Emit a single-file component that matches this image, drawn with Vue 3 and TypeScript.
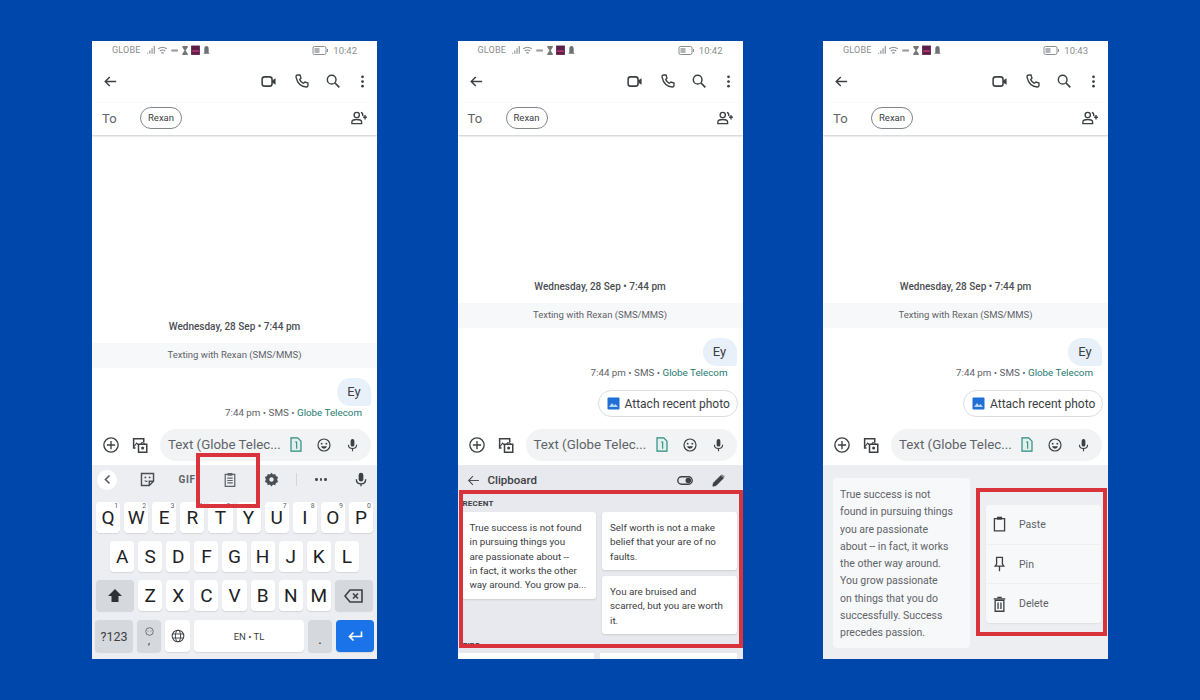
<script setup lang="ts">
interface PhoneData { id: number; time: string }
const phones: PhoneData[] = [
  { id: 1, time: '10:42' },
  { id: 2, time: '10:42' },
  { id: 3, time: '10:43' },
]
const row1 = ['Q','W','E','R','T','Y','U','I','O','P']
const nums = ['1','2','3','4','5','6','7','8','9','0']
const row2 = ['A','S','D','F','G','H','J','K','L']
const row3 = ['Z','X','C','V','B','N','M']
</script>

<template>
  <main class="page">
    <section v-for="p in phones" :key="p.id" class="phone">
      <div class="status">
        <span class="carrier">GLOBE</span>
        <svg class="status-icons" width="66" height="11" viewBox="0 0 60 10">
          <path d="M1 8h1V7H1zM3 8h1V5H3zM5 8h1V3H5zM7 8h1V1H7z" fill="#8a8d91"/>
          <path d="M11 3.500q4-3 8 0M12.500 5.500q2.500-2 5 0M14 7.500q1-1 2 0" stroke="#8a8d91" fill="none"/>
          <path d="M23 4h6v2h-6z" fill="#9a9da1"/>
          <path d="M33 1h5v1l-2 3 2 3v1h-5V8l2-3-2-3z" fill="#777"/>
          <rect x="41" y="0.500" width="8" height="8.500" fill="#5c1f49"/>
          <path d="M42 5h6v1h-6z" fill="#e0447c"/>
          <path d="M55 1q2 0 2 3v3l1 1h-6l1-1V4q0-3 2-3z" fill="#6d7074"/>
        </svg>
        <span class="grow"></span>
        <svg width="17" height="9" viewBox="0 0 16 9"><rect x=".5" y=".5" width="13" height="8" rx="1.500" fill="none" stroke="#8a8d91"/><path d="M2 2h5v5H2z" fill="#b0b3b6"/><path d="M14.500 3h1v3h-1z" fill="#8a8d91"/></svg>
        <span class="clock">{{ p.time }}</span>
      </div>

      <header class="appbar">
        <svg class="icon" viewBox="0 0 24 24"><path d="M20 12H5M11 5.500 4.500 12l6.500 6.500" fill="none" stroke="#3c4043" stroke-width="2"/></svg>
        <span class="grow"></span>
        <svg class="icon bar-video" viewBox="0 0 24 24"><path d="M3 9q0-3.500 3.500-3.500h7Q17 5.500 17 9v6q0 3.500-3.500 3.500h-7Q3 18.500 3 15z" fill="none" stroke="#3c4043" stroke-width="2.200"/><path d="M17 10.500l5-3v9l-5-3z" fill="#3c4043"/></svg>
        <svg class="icon bar-phone" viewBox="0 0 24 24"><path d="M5.500 3h3.500l1.500 4.500-2 2.500q2 4 5.500 5.500l2.500-2 4.500 1.500V18q0 3-2.500 3Q6 20 3 6q0-3 2.500-3z" fill="none" stroke="#3c4043" stroke-width="2"/></svg>
        <svg class="icon bar-search" viewBox="0 0 24 24"><circle cx="10" cy="10" r="6.500" fill="none" stroke="#3c4043" stroke-width="2.200"/><path d="M15 15l6.500 6.500" stroke="#3c4043" stroke-width="2.600"/></svg>
        <svg class="icon bar-more" viewBox="0 0 24 24"><circle cx="12" cy="4.500" r="2.200" fill="#3c4043"/><circle cx="12" cy="12" r="2.200" fill="#3c4043"/><circle cx="12" cy="19.500" r="2.200" fill="#3c4043"/></svg>
      </header>

      <div class="to-row">
        <span class="to">To</span>
        <span class="chip">Rexan</span>
        <span class="grow"></span>
        <svg class="add-person" viewBox="0 0 24 24"><circle cx="9" cy="8" r="3.500" fill="none" stroke="#3c4043" stroke-width="1.800"/><path d="M2.500 19.500v-2q0-3.500 6.500-3.500t6.500 3.500v2z" fill="none" stroke="#3c4043" stroke-width="1.800"/><path d="M14.500 4.500q3 .5 2.500 5M20 8v6M17.500 11h5" fill="none" stroke="#3c4043" stroke-width="1.800"/></svg>
      </div>

      <div class="messages">
        <div class="date">Wednesday, 28 Sep • 7:44 pm</div>
        <div class="band">Texting with Rexan (SMS/MMS)</div>
        <div class="bubble">Ey</div>
        <div class="meta">7:44 pm • SMS • <span class="carrier-link">Globe Telecom</span></div>
        <div v-if="p.id !== 1" class="attach">
          <svg width="13" height="13" viewBox="0 0 13 13"><rect x=".5" y=".5" width="12" height="12" rx="1" fill="#1f6fd6"/><path d="M2 10l3-4 2 2.500L8.500 7 11 10z" fill="#bcd6f6"/></svg>
          <span>Attach recent photo</span>
        </div>
      </div>

      <div class="compose">
        <svg class="compose-plus" viewBox="0 0 24 24"><circle cx="12" cy="12" r="9.500" fill="none" stroke="#3c4043" stroke-width="1.800"/><path d="M12 6.500v11M6.500 12h11" stroke="#3c4043" stroke-width="1.800"/></svg>
        <svg class="compose-media" viewBox="0 0 24 24"><path d="M6 16H3.500V3.500H17V8" fill="none" stroke="#3c4043" stroke-width="2"/><path d="M4 14l3.500-4.500 3 3" fill="none" stroke="#3c4043" stroke-width="1.500"/><path d="M10 11h11v10.500H10z" fill="none" stroke="#3c4043" stroke-width="2"/><path d="M13 11l1-2h3l1 2" fill="none" stroke="#3c4043" stroke-width="1.500"/><circle cx="15.500" cy="16" r="2" fill="#3c4043"/></svg>
        <div class="pill">
          <span class="pill-text">Text (Globe Telec...</span>
          <svg class="sim" viewBox="0 0 14 18"><path d="M1 1h8l4 4v12H1z" fill="#e3f1ee" stroke="#2a8a7d" stroke-width="1.400"/><path d="M6 6h1.800v8" fill="none" stroke="#2a8a7d" stroke-width="1.300"/></svg>
          <svg class="emoji" viewBox="0 0 24 24"><circle cx="12" cy="12" r="9" fill="none" stroke="#3c4043" stroke-width="1.800"/><circle cx="8.500" cy="10" r="1.400" fill="#3c4043"/><circle cx="15.500" cy="10" r="1.400" fill="#3c4043"/><path d="M7.500 14h9q-1 3.500-4.500 3.500T7.500 14z" fill="#3c4043"/></svg>
          <svg class="mic" viewBox="0 0 24 24"><rect x="9" y="2.500" width="6" height="12" rx="3" fill="#3c4043"/><path d="M5.500 11.500q0 6 6.500 6t6.500-6M12 17.500V22" fill="none" stroke="#3c4043" stroke-width="1.800"/></svg>
        </div>
      </div>

      <!-- Phone 1: keyboard -->
      <div v-if="p.id === 1" class="keyboard">
        <div class="toolbar">
          <span class="tb tb-back"><span class="back-circle"><svg width="9" height="11" viewBox="0 0 9 11"><path d="M6.500 1.500 2.500 5.500l4 4" fill="none" stroke="#555a60" stroke-width="1.600"/></svg></span></span>
          <span class="tb tb-sticker"><svg width="17" height="17" viewBox="0 0 24 24"><path d="M3.500 3.500h17v11l-6 6h-11z" fill="none" stroke="#4a4e53" stroke-width="2"/><path d="M14.500 20.500v-6h6" fill="none" stroke="#4a4e53" stroke-width="2"/><circle cx="9" cy="9" r="1.300" fill="#4a4e53"/><circle cx="15" cy="9" r="1.300" fill="#4a4e53"/><path d="M8 13.500q2 1.500 4 1" fill="none" stroke="#4a4e53" stroke-width="1.500"/></svg></span>
          <span class="tb tb-gif">GIF</span>
          <span class="tb tb-clip"><svg width="14" height="15" viewBox="0 0 20 22"><path d="M3 3.500h14V21H3z" fill="none" stroke="#5f6368" stroke-width="1.800"/><rect x="6.500" y="1.500" width="7" height="4" fill="#5f6368"/><path d="M6 9h8M6 12.500h8M6 16h8" stroke="#5f6368" stroke-width="1.600"/></svg></span>
          <span class="tb tb-gear"><svg width="15" height="15" viewBox="0 0 24 24"><path d="M12 1l2.500 3 3.500-1 1 3.500 3.500 1.500-1.500 4 1.500 4-3.500 1.500-1 3.500-3.500-1L12 23l-2.500-3-3.500 1-1-3.500L1.500 16 3 12 1.500 8 5 6.500 6 3l3.500 1z" fill="#4a4e53"/><circle cx="12" cy="12" r="3.500" fill="#eceef1"/></svg></span>
          <span class="tb tb-div"><i></i></span>
          <span class="tb tb-dots"><b></b><b></b><b></b></span>
          <span class="tb tb-mic"><svg width="16" height="17" viewBox="0 0 24 24"><rect x="8.500" y="2" width="7" height="13" rx="3.500" fill="#3c4043"/><path d="M5 11.500q0 7 7 7t7-7M12 18v4" fill="none" stroke="#3c4043" stroke-width="2"/></svg></span>
        </div>
        <div class="kb-row">
          <span v-for="(k, i) in row1" :key="k" class="key">{{ k }}<sup class="hint">{{ nums[i] }}</sup></span>
        </div>
        <div class="kb-row">
          <span v-for="k in row2" :key="k" class="key">{{ k }}</span>
        </div>
        <div class="kb-row">
          <span class="key fn wide">
            <svg width="16" height="15" viewBox="0 0 16 15"><path d="M8 1l7 7h-3.500v6h-7V8H1z" fill="#2f3235"/></svg>
          </span>
          <span v-for="k in row3" :key="k" class="key">{{ k }}</span>
          <span class="key fn wide">
            <svg width="19" height="14" viewBox="0 0 19 14"><path d="M6 1h12v12H6L1 7z" fill="none" stroke="#3c4043" stroke-width="1.600"/><path d="M9 4.500l5 5M14 4.500l-5 5" stroke="#3c4043" stroke-width="1.600"/></svg>
          </span>
        </div>
        <div class="kb-row kb-last">
          <span class="key fn wide sym">?123</span>
          <span class="key fn comma">
            <svg width="9" height="9" viewBox="0 0 9 9"><circle cx="4.500" cy="4.500" r="3.800" fill="none" stroke="#70757a"/><circle cx="3" cy="4" r=".6" fill="#70757a"/><circle cx="6" cy="4" r=".6" fill="#70757a"/></svg>
            <span>,</span>
          </span>
          <span class="key globe">
            <svg width="14" height="14" viewBox="0 0 24 24"><circle cx="12" cy="12" r="10" fill="none" stroke="#3c4043" stroke-width="1.800"/><ellipse cx="12" cy="12" rx="4.500" ry="10" fill="none" stroke="#3c4043" stroke-width="1.600"/><path d="M2.500 8.500h19M2.500 15.500h19" stroke="#3c4043" stroke-width="1.600"/></svg>
          </span>
          <span class="key space">EN • TL</span>
          <span class="key fn dot">.</span>
          <span class="key enter">
            <svg width="15" height="11" viewBox="0 0 15 11"><path d="M13.500 1v5H2M5.500 2 1.500 6l4 4" fill="none" stroke="#fff" stroke-width="1.700" transform="translate(0 -.5)"/></svg>
          </span>
        </div>
        <div class="mark mark-clip"></div>
      </div>

      <!-- Phone 2: clipboard -->
      <div v-else-if="p.id === 2" class="clipboard">
        <div class="clip-head">
          <svg width="13" height="13" viewBox="0 0 24 24"><path d="M22 12H4M11 4l-8 8 8 8" fill="none" stroke="#4a4e53" stroke-width="2"/></svg>
          <strong>Clipboard</strong>
          <span class="grow"></span>
          <svg class="clip-toggle" width="16" height="9" viewBox="0 0 16 9"><rect x=".8" y=".8" width="14.400" height="7.400" rx="3.700" fill="none" stroke="#3c4043" stroke-width="1.400"/><circle cx="11.300" cy="4.500" r="2.800" fill="#3c4043"/></svg>
          <svg width="15" height="15" viewBox="0 0 24 24"><path d="M3 21l1-5L16 4l4 4L8 20zM17.500 2.500l4 4" fill="#3c4043" stroke="#3c4043" stroke-width="1.500"/></svg>
        </div>
        <div class="recent">RECENT</div>
        <div class="clip-grid">
          <div class="clip-col">
            <div class="clip-card left">True success is not found<br>in pursuing things you<br>are passionate about --<br>in fact, it works the other<br>way around. You grow pa...</div>
          </div>
          <div class="clip-col">
            <div class="clip-card c1">Self worth is not a make<br>belief that your are of no<br>faults.</div>
            <div class="clip-card c2">You are bruised and<br>scarred, but you are worth<br>it.</div>
          </div>
        </div>
        <div class="tips">TIPS</div>
        <div class="tips-cards"><span></span><span></span></div>
        <div class="mark mark-recent"></div>
      </div>

      <!-- Phone 3: paste menu -->
      <div v-else class="paste-view">
        <div class="full-card">True success is not<br>found in pursuing things<br>you are passionate<br>about -- in fact, it works<br>the other way around.<br>You grow passionate<br>on things that you do<br>successfully. Success<br>precedes passion.</div>
        <div class="menu">
          <div class="menu-item">
            <svg width="15" height="16" viewBox="0 0 20 22"><path d="M3 3.500h14V20.500H3z" fill="none" stroke="#3c4043" stroke-width="1.800"/><rect x="6.500" y="1" width="7" height="4" fill="#3c4043"/></svg>
            <span>Paste</span>
          </div>
          <div class="menu-item">
            <svg width="15" height="16" viewBox="0 0 20 22"><path d="M6 2h8v9l2 3H4l2-3zM10 14v7" fill="none" stroke="#3c4043" stroke-width="1.800"/></svg>
            <span>Pin</span>
          </div>
          <div class="menu-item">
            <svg width="15" height="16" viewBox="0 0 20 22"><path d="M4 6h12v15H4zM2 4h16M7 2h6M8 9v9M12 9v9" fill="none" stroke="#3c4043" stroke-width="1.800"/></svg>
            <span>Delete</span>
          </div>
        </div>
        <div class="mark mark-menu"></div>
      </div>
    </section>
  </main>
</template>

<style>
html, body { margin: 0; background: #0047ab; }
</style>

<style scoped>
.page {
  width: 1200px; height: 700px; box-sizing: border-box;
  padding: 41px 0 0 92px; display: flex; gap: 80.500px;
  background: #0047ab; overflow: hidden;
  font-family: Roboto, "Liberation Sans", sans-serif; color: #3c4043;
}
.phone { position: relative; width: 285px; height: 618px; background: #fff; display: flex; flex-direction: column; overflow: hidden; }
.grow { flex: 1; }
.status { height: 18px; flex: none; display: flex; align-items: center; padding: 0 20px 0 20px; font-size: 9px; color: #8a8d91; }
.carrier { letter-spacing: .2px; }
.status-icons { margin-left: 5px; }
.clock { margin-left: 4px; font-size: 9.500px; }
.appbar { height: 44px; flex: none; display: flex; align-items: center; padding: 0 7px 0 10px; }
.icon { width: 17px; height: 17px; display: block; flex: none; }
.bar-video { margin-right: 17px; }
.bar-phone { margin-right: 15px; width: 16px; height: 16px; }
.bar-search { margin-right: 14px; width: 16px; height: 16px; }
.bar-more { width: 15px; height: 15px; }
.to-row { height: 32px; flex: none; box-sizing: border-box; padding: 0 9px 2px 10px; display: flex; align-items: center; box-shadow: 0 1px 2px rgba(60,64,67,.28); position: relative; }
.to { font-size: 13px; color: #5f6368; width: 38px; }
.chip { height: 20px; line-height: 20px; width: 40px; text-align: center; border: 1px solid #80868b; border-radius: 11px; font-size: 9.500px; color: #3c4043; }
.add-person { width: 18px; height: 18px; }

.messages { flex: 1; min-height: 0; display: flex; flex-direction: column; justify-content: flex-end; align-items: stretch; padding-bottom: 4px; }
.date { text-align: center; font-size: 10px; font-weight: 500; color: #4a4e53; margin-bottom: 10px; line-height: 12px; }
.band { height: 25px; line-height: 24px; text-align: center; font-size: 9.500px; color: #5f6368; background: #f7f8fa; margin-bottom: 10px; }
.bubble { align-self: flex-end; margin-right: 6px; width: 34px; height: 28px; line-height: 28px; text-align: center; border-radius: 14px 14px 3px 14px; background: #e8f0fa; font-size: 13px; color: #3c4043; }
.meta { align-self: flex-end; margin-right: 15px; font-size: 9.800px; line-height: 14px; color: #5f6368; }
.carrier-link { color: #1f7a70; }
.attach { align-self: flex-end; margin: 10px 5px 3px 0; width: 140px; height: 27px; box-sizing: border-box; border: 1px solid #dadce0; border-radius: 14px; display: flex; align-items: center; gap: 5px; padding-left: 8px; font-size: 12px; color: #3c4043; }

.compose { height: 41px; flex: none; box-sizing: border-box; display: flex; align-items: center; padding: 0 6px 0 10px; }
.compose-plus { width: 18px; height: 18px; margin-right: 11px; flex: none; }
.compose-media { width: 18px; height: 18px; margin-right: 11px; flex: none; }
.pill { flex: 1; height: 32px; border-radius: 16px; background: #f1f3f4; display: flex; align-items: center; padding: 0 11px 0 8px; }
.pill-text { flex: 1; font-size: 13.300px; color: #5f6368; white-space: nowrap; }
.sim { width: 12px; height: 15px; margin-right: 14px; }
.emoji { width: 16px; height: 16px; margin-right: 13px; }
.mic { width: 15px; height: 16px; }

.keyboard { position: relative; flex: none; height: 194px; box-sizing: border-box; background: #eceef1; padding: 0 3px 7px; display: flex; flex-direction: column; gap: 8px; }
.toolbar { height: 29px; flex: none; margin: 0 -3px; display: flex; align-items: center; }
.tb { display: flex; align-items: center; justify-content: center; flex: none; height: 100%; }
.tb-back { width: 30px; }
.tb-sticker { width: 50px; }
.tb-gif { width: 30px; font-size: 10px; font-weight: 700; color: #5f6368; letter-spacing: .6px; }
.tb-clip { width: 56px; }
.tb-gear { width: 26px; }
.tb-div { width: 24px; }
.tb-div i { width: 1px; height: 13px; background: #d3d5d9; }
.tb-dots { width: 26px; gap: 2px; }
.tb-dots b { width: 2.500px; height: 2.500px; border-radius: 50%; background: #4a4e53; }
.tb-mic { width: 32px; margin-left: auto; }
.back-circle { width: 20px; height: 20px; border-radius: 50%; background: #fff; display: flex; align-items: center; justify-content: center; }
.kb-row { display: flex; justify-content: center; gap: 4px; height: 31px; flex: none; }
.kb-last { height: 32px; margin-top: 1px; }
.key { position: relative; width: 24.100px; height: 100%; background: #fff; border-radius: 4px; box-shadow: 0 1px 1px rgba(0,0,0,.1); display: flex; align-items: center; justify-content: center; font-size: 19px; color: #202124; }
.hint { position: absolute; right: 2px; top: 0; font-size: 7px; line-height: 8px; color: #5f6368; }
.fn { background: #d5d8dc; }
.wide { width: 38px; }
.sym { font-size: 12.500px; color: #3c4043; }
.comma { flex-direction: column; font-size: 10px; line-height: 10px; width: 24px; }
.globe { width: 25px; }
.space { width: 110px; font-size: 9.500px; color: #3c4043; }
.dot { width: 24px; font-size: 13px; padding-top: 6px; box-sizing: border-box; }
.enter { width: 38px; background: #1a73e8; }

.mark { position: absolute; border: 4px solid #d9343c; box-sizing: border-box; pointer-events: none; }
.mark-clip { left: 104px; top: -12px; width: 64px; height: 55px; }
.mark-recent { left: 1px; top: 25px; width: 284px; height: 158px; }
.mark-menu { left: 153px; top: 23px; width: 131px; height: 148px; }

.clipboard { position: relative; flex: none; height: 194px; background: #e8e9ee; display: flex; flex-direction: column; overflow: hidden; }
.clip-head { height: 30px; flex: none; display: flex; align-items: center; padding: 0 17px 0 9px; }
.clip-head strong { margin-left: 8px; font-size: 11.500px; font-weight: 500; color: #3c4043; }
.clip-toggle { margin-right: 18px; }
.recent { margin: 4px 0 0 5px; font-size: 8px; font-weight: 700; line-height: 10px; color: #3c4043; letter-spacing: .2px; }
.clip-grid { margin-top: 3px; padding: 0 6px 0 4px; display: flex; gap: 6px; }
.clip-col { flex: 1; display: flex; flex-direction: column; gap: 6px; }
.clip-card { background: #fff; border-radius: 3px; box-shadow: 0 1px 2px rgba(0,0,0,.12); font-size: 9.800px; line-height: 14.300px; color: #3c4043; padding: 9px 0 0 8px; box-sizing: border-box; white-space: nowrap; }
.left { height: 87px; }
.c1 { height: 58px; }
.c2 { height: 58px; }
.tips { position: absolute; left: 5px; top: 176px; font-size: 8px; font-weight: 700; color: #3c4043; }
.tips-cards { position: absolute; left: 0; right: 0; top: 188px; height: 10px; display: flex; gap: 6px; padding: 0 6px 0 0; }
.tips-cards span { flex: 1; background: #fff; }

.paste-view { position: relative; flex: none; height: 194px; background: #eceef1; display: flex; align-items: flex-start; }
.full-card { width: 137px; height: 170px; margin: 13px 0 0 10px; flex: none; box-sizing: border-box; background: #f7f8fa; border-radius: 4px; padding: 8px 0 0 7px; font-size: 10.500px; line-height: 17.300px; color: #5f6368; white-space: nowrap; }
.menu { width: 115px; height: 118px; margin: 40px 0 0 16px; background: #f7f8fa; border-radius: 3px; display: flex; flex-direction: column; box-shadow: 0 1px 2px rgba(0,0,0,.06); }
.menu-item { flex: 1; display: flex; align-items: center; gap: 12px; padding-left: 6px; font-size: 10.500px; color: #5f6368; }
.menu-item + .menu-item { border-top: 1px solid #eef0f2; }
</style>
